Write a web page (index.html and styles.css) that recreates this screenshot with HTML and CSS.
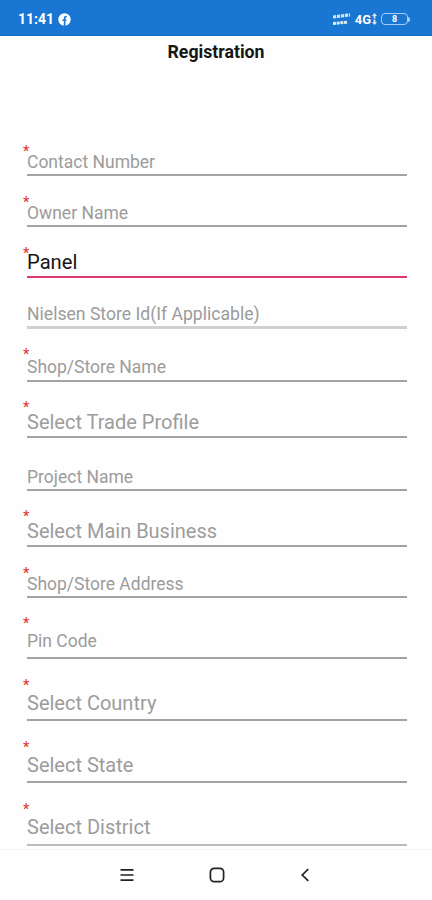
FILE: index.html
```html
<!DOCTYPE html>
<html lang="en">
<head>
    <meta charset="UTF-8">
    <meta name="viewport" content="width=device-width, initial-scale=1.0">
    <title>Registration</title>
    <link rel="stylesheet" href="styles.css">
</head>
<body>
    <header class="status-bar">
        <div class="status-left">
            <span class="clock">11:41</span>
            <svg class="facebook" width="13" height="13" viewBox="0 0 13 13">
                <circle cx="6.5" cy="6.5" r="6.2" fill="#fff"/>
                <path d="M6.6 13V5.3c0-1.3.7-1.9 2.2-1.8M4.4 7.2h4" fill="none" stroke="#1976d2" stroke-width="1.6"/>
            </svg>
        </div>
        <div class="status-right">
            <svg width="18" height="14" viewBox="0 0 18 14" fill="none" stroke="#fff">
                <path d="M0 5L17 2.8" stroke-width="3.2" stroke-dasharray="3.2 .8" opacity=".8"/>
                <path d="M0 11.5L14 10.2" stroke-width="3" stroke-dasharray="3 .7" opacity=".85"/>
            </svg>
            <span class="network">4G</span>
            <svg class="arrows" width="5" height="12" viewBox="0 0 5 12" fill="#fff" opacity=".85">
                <path d="M2.5 0L5 3H3.4v2.4H1.6V3H0zM2.5 12L0 9h1.6V6.6h1.8V9H5z"/>
            </svg>
            <span class="battery">8</span>
            <span class="battery-tip"></span>
        </div>
    </header>
    <main>
        <h1>Registration</h1>
        <form class="fields">
            <div class="field required"><span>Contact Number</span></div>
            <div class="field required"><span>Owner Name</span></div>
            <div class="field required active"><span>Panel</span></div>
            <div class="field disabled"><span>Nielsen Store Id(If Applicable)</span></div>
            <div class="field required shop"><span>Shop/Store Name</span></div>
            <div class="field required select"><span>Select Trade Profile</span></div>
            <div class="field project"><span>Project Name</span></div>
            <div class="field required select"><span>Select Main Business</span></div>
            <div class="field required"><span>Shop/Store Address</span></div>
            <div class="field required tall"><span>Pin Code</span></div>
            <div class="field required select tall"><span>Select Country</span></div>
            <div class="field required select tall"><span>Select State</span></div>
            <div class="field required select tall last"><span>Select District</span></div>
        </form>
    </main>
    <nav class="nav-bar">
        <svg width="14" height="14" viewBox="0 0 14 14" fill="none" stroke="#222" stroke-width="1.7">
            <path d="M.5 1.8h13M.5 7h13M.5 12.2h13"/>
        </svg>
        <svg width="16" height="16" viewBox="0 0 16 16" fill="none" stroke="#222" stroke-width="1.7">
            <rect x="1.4" y="1.3" width="13.2" height="13.4" rx="3.8"/>
        </svg>
        <svg width="10" height="14" viewBox="0 0 10 14" fill="none" stroke="#222" stroke-width="1.7">
            <path d="M8.3 1.2L2.2 7l6.1 5.8"/>
        </svg>
    </nav>
</body>
</html>
```

FILE: styles.css
```css
* {
    box-sizing: border-box;
}
body {
    margin: 0;
    height: 900px;
    display: flex;
    flex-direction: column;
    overflow: hidden;
    font-family: Roboto, sans-serif;
    background: #fefefe;
}
.status-bar {
    height: 36px;
    padding: 3px 22px 0 18px;
    display: flex;
    justify-content: space-between;
    align-items: center;
    background: #1976d2;
    border-bottom: 1px solid #1469bd;
    color: white;
}
.status-left,
.status-right {
    display: flex;
    align-items: center;
}
.clock {
    font-size: 14px;
    font-weight: 700;
    line-height: 16px;
}
.facebook {
    margin-left: 4px;
}
.network {
    margin-left: 4px;
    font-size: 13px;
    font-weight: 700;
}
.arrows {
    margin-left: 1px;
}
.battery {
    width: 27px;
    height: 12px;
    margin-left: 4px;
    border: 1px solid #a9cdf0;
    border-radius: 4px;
    font-size: 9px;
    font-weight: 700;
    line-height: 10px;
    text-align: center;
}
.battery-tip {
    width: 2px;
    height: 5px;
    background: #a9cdf0;
    border-radius: 0 2px 2px 0;
}
main {
    height: 813px;
}
h1 {
    margin: 0;
    padding-top: 6px;
    height: 89px;
    font-size: 17.7px;
    font-weight: 700;
    line-height: 20px;
    text-align: center;
    color: #161616;
}
.fields {
    padding: 0 25px 0 27px;
}
.field {
    position: relative;
    height: 51px;
    padding-bottom: 2px;
    display: flex;
    align-items: flex-end;
    border-bottom: 2px solid #a3a3a3;
    color: #9c9c9c;
    font-size: 17.5px;
    line-height: 20px;
}
/* the red star hangs over the top left corner of the label */
.required::before {
    content: "*";
    position: absolute;
    left: -4px;
    bottom: 15px;
    color: #e53935;
    font-size: 14px;
    font-weight: 500;
    line-height: 16px;
}
.active {
    border-color: #e0366f;
    padding-bottom: 4px;
    color: #161616;
    font-size: 20.2px;
}
.disabled {
    border-bottom: 3px solid #d0d0d0;
    font-size: 17.6px;
}
.shop,
.project {
    height: 53px;
}
.shop {
    padding-bottom: 3px;
}
.shop::before {
    bottom: 18px;
}
.select {
    height: 56px;
    padding-bottom: 4px;
    font-size: 20px;
}
.select::before {
    bottom: 21px;
}
.tall {
    height: 61px;
    padding-bottom: 6px;
}
.tall::before {
    bottom: 26px;
}
.select.tall {
    height: 62px;
}
.select.tall.last {
    height: 63px;
    padding-bottom: 7px;
    border-color: #bbb;
}
.select.tall.last::before {
    bottom: 27px;
}
.nav-bar {
    height: 51px;
    padding: 0 122px 0 120px;
    display: flex;
    justify-content: space-between;
    align-items: center;
    border-top: 1px solid #f3f3f3;
}
```
